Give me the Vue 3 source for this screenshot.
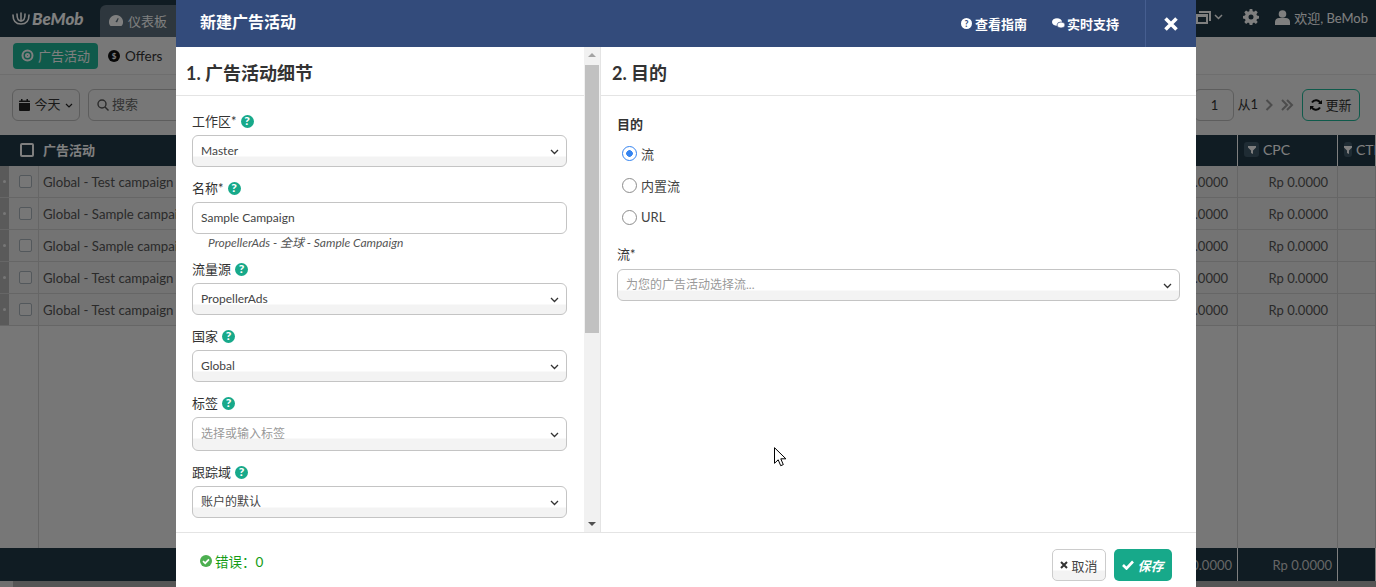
<script setup>
import { ref } from 'vue';

const rows = ref([
  'Global - Test campaign',
  'Global - Sample campaign',
  'Global - Sample campaign',
  'Global - Test campaign',
  'Global - Test campaign',
]);

const fields = [
  { label: '工作区*', value: 'Master' },
  { label: '名称*', value: 'Sample Campaign', input: true, hint: true },
  { label: '流量源', value: 'PropellerAds' },
  { label: '国家', value: 'Global' },
  { label: '标签', value: '选择或输入标签', placeholder: true, tall: true, cjk: true },
  { label: '跟踪域', value: '账户的默认', cjk: true },
];

const goals = [
  { label: '流', checked: true },
  { label: '内置流', checked: false },
  { label: 'URL', checked: false },
];
</script>

<template>
  <div class="page">
    <header class="topbar">
      <div class="logo">
        <svg width="18" height="16" viewBox="0 0 18 16" fill="none" stroke="#fff" stroke-width="1.6" stroke-linecap="round">
          <path d="M1 4c0 6 3 9 8 9s8-3 8-9" />
          <path d="M5 3c0 5 1 7 4 7s4-2 4-7" />
          <path d="M9 2v8" />
        </svg>
        <span>BeMob</span>
      </div>
      <div class="tab">
        <svg width="14" height="12" viewBox="0 0 14 12"><path fill="#fff" d="M7 0a7 7 0 0 0-6 10.6c.2.3.5.4.8.4h10.4c.3 0 .6-.1.8-.4A7 7 0 0 0 7 0zm0 7a1.3 1.3 0 0 1-.6-.1L8.800 3l.9.4-1.500 3.800A1.300 1.300 0 0 1 7 7z" /></svg>
        <span>仪表板</span>
      </div>
      <div class="topbar-right">
        <svg width="15" height="13" viewBox="0 0 15 13"><path fill="#fff" d="M3 0h12v10h-2V2H3zM0 3h12v10H0zm2 3v5h8V6z" /></svg>
        <svg class="chevron-top" width="9" height="6" viewBox="0 0 9 6" fill="none" stroke="#fff" stroke-width="1.500"><path d="M1 1l3.500 3.500L8 1" /></svg>
        <svg class="gear" width="16" height="16" viewBox="0 0 16 16"><path fill="#fff" fill-rule="evenodd" d="M6.700 0h2.600l.4 2.200 1.300.6 1.900-1.300 1.800 1.800-1.300 1.900.6 1.300 2 .4v2.600l-2 .4-.6 1.300 1.300 1.900-1.800 1.800-1.900-1.300-1.300.6-.4 2H6.700l-.4-2-1.300-.6-1.900 1.300-1.800-1.800 1.300-1.900-.6-1.300-2-.4V6.900l2-.4.6-1.300-1.300-1.900 1.800-1.800L5 2.800l1.300-.6zM8 5.500a2.500 2.500 0 1 0 0 5 2.500 2.500 0 0 0 0-5z" /></svg>
        <svg class="user" width="15" height="15" viewBox="0 0 15 15"><circle cx="7.500" cy="4" r="3.800" fill="#fff" /><path fill="#fff" d="M0 15v-3c0-2.500 2-4 4-4h7c2 0 4 1.500 4 4v3z" /></svg>
        <span class="welcome">欢迎, BeMob</span>
      </div>
    </header>

    <nav class="subnav">
      <div class="subnav-active">
        <svg width="13" height="13" viewBox="0 0 13 13" fill="none" stroke="#fff" stroke-width="2"><circle cx="6.500" cy="6.500" r="5" /><circle cx="6.500" cy="6.500" r="1.500" /></svg>
        <span>广告活动</span>
      </div>
      <div class="subnav-item">
        <svg width="12" height="12" viewBox="0 0 12 12"><circle cx="6" cy="6" r="6" fill="#111" /><text x="6" y="9" text-anchor="middle" font-size="8" font-weight="700" fill="#fff" font-family="Lato">$</text></svg>
        <span>Offers</span>
      </div>
    </nav>

    <div class="toolbar">
      <button class="tool-btn date-btn">
        <svg width="11" height="12" viewBox="0 0 11 12"><path fill="#222" d="M0 4h11v7a1 1 0 0 1-1 1H1a1 1 0 0 1-1-1zm2-4h1.500v1.500h4V0H9v1.500h1a1 1 0 0 1 1 1V3H0v-.5a1 1 0 0 1 1-1h1z" /></svg>
        <span>今天</span>
        <svg width="8" height="5" viewBox="0 0 8 5" fill="none" stroke="#222" stroke-width="1.200"><path d="M1 1l3 3 3-3" /></svg>
      </button>
      <div class="tool-btn search-box">
        <svg width="12" height="12" viewBox="0 0 12 12" fill="none" stroke="#555" stroke-width="1.400"><circle cx="5" cy="5" r="4" /><path d="M8 8l3.500 3.500" /></svg>
        <span>搜索</span>
      </div>
      <div class="toolbar-right">
        <div class="tool-btn page-input">1</div>
        <span class="page-of">从1</span>
        <svg width="9" height="12" viewBox="0 0 9 12" fill="none" stroke="#999" stroke-width="2"><path d="M1.500 1l5 5-5 5" /></svg>
        <svg class="double" width="13" height="12" viewBox="0 0 13 12" fill="none" stroke="#999" stroke-width="2"><path d="M1 1l5 5-5 5M6 1l5 5-5 5" /></svg>
        <button class="tool-btn refresh-btn">
          <svg width="12" height="12" viewBox="0 0 12 12" fill="none" stroke="#111" stroke-width="2"><path d="M10.500 4.500A4.700 4.700 0 0 0 2 3.500M1.500 7.500A4.700 4.700 0 0 0 10 8.500" /><path fill="#111" stroke="none" d="M12 1v4H8zM0 11V7h4z" /></svg>
          <span>更新</span>
        </button>
      </div>
    </div>

    <section class="table">
      <div class="table-row table-head">
        <div class="cell cell-check"><span class="check check-head"></span></div>
        <div class="cell cell-name">广告活动</div>
        <div class="cell cell-num"></div>
        <div class="cell cell-num cell-metric">
          <span class="filter"><svg width="8" height="8" viewBox="0 0 8 8"><path fill="#fff" d="M0 0h8v1.500L5 4.500V8L3 7V4.500L0 1.500z" /></svg></span>CPC
        </div>
        <div class="cell cell-metric">
          <span class="filter"><svg width="8" height="8" viewBox="0 0 8 8"><path fill="#fff" d="M0 0h8v1.500L5 4.500V8L3 7V4.500L0 1.500z" /></svg></span>CTR
        </div>
      </div>
      <div v-for="(row, index) in rows" :key="index" class="table-row table-data">
        <div class="cell cell-check">
          <span class="handle"><i></i></span>
          <span class="check"></span>
        </div>
        <div class="cell cell-name">{{ row }}</div>
        <div class="cell cell-num">Rp 0.0000</div>
        <div class="cell cell-num">Rp 0.0000</div>
        <div class="cell"></div>
      </div>
      <div class="table-row table-fill">
        <div class="cell"></div>
        <div class="cell"></div>
        <div class="cell"></div>
        <div class="cell"></div>
        <div class="cell"></div>
      </div>
      <div class="table-row table-total">
        <div class="cell"></div>
        <div class="cell"></div>
        <div class="cell cell-num">Rp 0.0000</div>
        <div class="cell cell-num">Rp 0.0000</div>
        <div class="cell"></div>
      </div>
      <div class="hscroll"><span></span></div>
    </section>

    <div class="overlay"></div>

    <div class="modal">
      <div class="modal-head">
        <h1>新建广告活动</h1>
        <a class="head-link">
          <svg width="11" height="11" viewBox="0 0 11 11"><circle cx="5.500" cy="5.500" r="5.500" fill="#fff" /><text x="5.500" y="8.600" text-anchor="middle" font-size="8.500" font-weight="900" fill="#334b7b" font-family="Lato">?</text></svg>
          查看指南
        </a>
        <a class="head-link head-link-chat">
          <svg width="13" height="11" viewBox="0 0 13 11"><ellipse cx="5" cy="4" rx="5" ry="3.800" fill="#fff" /><ellipse cx="9" cy="7" rx="4" ry="3" fill="#fff" stroke="#334b7b" stroke-width=".7" /></svg>
          实时支持
        </a>
        <button class="close-btn">
          <svg width="14" height="14" viewBox="0 0 14 14" fill="none" stroke="#fff" stroke-width="3.600"><path d="M1.500 1.500l11 11M12.500 1.500l-11 11" /></svg>
        </button>
      </div>

      <div class="modal-body">
        <div class="panel-left">
          <div class="panel-scroll">
            <h2 class="panel-title">1. 广告活动细节</h2>
            <div class="form">
              <div v-for="field in fields" :key="field.label" class="group">
                <label class="label">
                  {{ field.label }}
                  <span class="help">?</span>
                </label>
                <div v-if="field.input" class="control control-input">{{ field.value }}</div>
                <div v-else class="control control-select" :class="{ tall: field.tall, muted: field.placeholder, cjk: field.cjk }">
                  <span>{{ field.value }}</span>
                  <svg width="9" height="6" viewBox="0 0 9 6" fill="none" stroke="#333" stroke-width="1.300"><path d="M1 1l3.500 3.500L8 1" /></svg>
                </div>
                <div v-if="field.hint" class="hint">PropellerAds - 全球 - Sample Campaign</div>
              </div>
            </div>
          </div>
          <div class="scrollbar">
            <span class="arrow arrow-up"></span>
            <span class="thumb"></span>
            <span class="arrow arrow-down"></span>
          </div>
        </div>

        <div class="panel-right">
          <h2 class="panel-title">2. 目的</h2>
          <div class="form form-right">
            <div class="goal-label">目的</div>
            <div v-for="goal in goals" :key="goal.label" class="radio-row">
              <span class="radio" :class="{ on: goal.checked }"></span>
              <span>{{ goal.label }}</span>
            </div>
            <div class="flow-label">流*</div>
            <div class="control control-select muted cjk">
              <span>为您的广告活动选择流...</span>
              <svg width="9" height="6" viewBox="0 0 9 6" fill="none" stroke="#333" stroke-width="1.300"><path d="M1 1l3.500 3.500L8 1" /></svg>
            </div>
          </div>
        </div>
      </div>

      <div class="modal-foot">
        <div class="errors">
          <svg width="12" height="12" viewBox="0 0 12 12"><circle cx="6" cy="6" r="6" fill="#4caf50" /><path d="M3 6.200l2.200 2L9 4.300" fill="none" stroke="#fff" stroke-width="1.700" /></svg>
          <span>错误：0</span>
        </div>
        <button class="btn-cancel">
          <svg width="8" height="8" viewBox="0 0 8 8" fill="none" stroke="#333" stroke-width="2"><path d="M1 1l6 6M7 1L1 7" /></svg>
          取消
        </button>
        <button class="btn-save">
          <svg width="12" height="10" viewBox="0 0 12 10" fill="none" stroke="#fff" stroke-width="2.600"><path d="M1 5l3.500 3.500L11 1.500" /></svg>
          保存
        </button>
      </div>
    </div>

    <svg class="cursor" width="13" height="20" viewBox="0 0 13 20">
      <path fill="#fff" stroke="#000" stroke-width="1" d="M.5.700v15.600l3.700-3.500 2.500 5.900 2.600-1.100-2.500-5.800h5.100z" />
    </svg>
  </div>
</template>

<style scoped>
.page {
  position: relative;
  width: 1376px;
  height: 587px;
  overflow: hidden;
  background: #eeeeee;
  color: #333333;
  font-family: Lato, "Noto Sans CJK SC", sans-serif;
  font-size: 13px;
}

.topbar {
  display: flex;
  height: 37px;
  align-items: flex-end;
  padding-left: 12px;
  background: #203846;
  color: #ffffff;
}

.logo {
  display: flex;
  height: 37px;
  width: 88px;
  align-items: center;
  gap: 2px;
  font-size: 17px;
  font-weight: 900;
  font-style: italic;
}

.tab {
  display: flex;
  height: 32px;
  width: 90px;
  align-items: center;
  gap: 5px;
  padding-left: 9px;
  box-sizing: border-box;
  border-radius: 6px 6px 0 0;
  background: #5c6f7c;
  font-size: 13px;
}

.tab span {
  margin-bottom: 2px;
}

.topbar-right {
  display: flex;
  height: 37px;
  box-sizing: border-box;
  align-items: center;
  margin-left: auto;
  padding: 0 8px 3px 0;
}

.chevron-top {
  margin-left: 3px;
}

.gear {
  margin-left: 20px;
}

.user {
  margin-left: 16px;
}

.welcome {
  margin-left: 4px;
  font-size: 13px;
}

.subnav {
  display: flex;
  height: 38px;
  box-sizing: border-box;
  align-items: center;
  gap: 10px;
  padding: 0 0 0 13px;
  border-bottom: 1px solid #dddddd;
  background: #f0f0f0;
}

.subnav-active {
  display: flex;
  width: 85px;
  height: 26px;
  align-items: center;
  justify-content: center;
  gap: 4px;
  border-radius: 4px;
  background: #1fb596;
  color: #ffffff;
}

.subnav-item {
  display: flex;
  align-items: center;
  gap: 5px;
  font-size: 13.5px;
}

.toolbar {
  display: flex;
  height: 60px;
  align-items: center;
  gap: 8px;
  padding: 0 16px 0 12px;
  box-sizing: border-box;
}

.tool-btn {
  display: flex;
  height: 32px;
  box-sizing: border-box;
  align-items: center;
  border: 1px solid #bbbbbb;
  border-radius: 6px;
  background: #eeeeee;
  color: #333333;
  font: inherit;
}

.date-btn span,
.search-box span {
  margin-bottom: 3px;
}

.refresh-btn span {
  margin-bottom: 2px;
}

.date-btn {
  width: 68px;
  justify-content: center;
  gap: 4px;
  padding: 0;
}

.search-box {
  width: 200px;
  gap: 3px;
  padding-left: 8px;
  color: #666666;
}

.toolbar-right {
  display: flex;
  align-items: center;
  margin-left: auto;
}

.page-input {
  width: 40px;
  justify-content: center;
}

.page-of {
  margin: 0 7px 3px 3px;
}

.double {
  margin-left: 7px;
}

.refresh-btn {
  width: 58px;
  justify-content: center;
  gap: 3px;
  margin-left: 8px;
  padding: 0;
  border-color: #1fb596;
}

.table-row {
  display: grid;
  grid-template-columns: 39px 1099px 100px 100px 38px;
}

.cell {
  display: flex;
  box-sizing: border-box;
  align-items: center;
  min-width: 0;
  border-right: 1px solid #cccccc;
  white-space: nowrap;
}

.table-head {
  height: 31px;
  background: #203846;
  color: #ffffff;
  font-size: 13px;
  font-weight: 700;
}

.table-head .cell {
  padding-bottom: 2px;
  border-right-color: #ffffff;
}

.table-head .cell:nth-child(-n + 2),
.table-total .cell:nth-child(-n + 2) {
  border-right-color: transparent;
}

.check {
  display: block;
  width: 11px;
  height: 11px;
  border: 1px solid #a7b0b8;
  border-radius: 2px;
  background: #eeeeee;
}

.check-head {
  width: 10px;
  height: 10px;
  border: 2px solid #ffffff;
  background: transparent;
}

.cell-check {
  position: relative;
  padding-left: 19px;
}

.table-head .cell-check {
  padding-left: 20px;
}

.cell-name {
  padding-left: 4px;
}

.cell-num {
  justify-content: flex-end;
  padding-right: 9px;
  font-size: 13px;
}

.cell-metric {
  justify-content: flex-start;
  padding: 0 0 2px 6px;
  gap: 4px;
  font-size: 14px;
  font-weight: 400;
}

.filter {
  display: flex;
  width: 15px;
  height: 15px;
  align-items: center;
  justify-content: center;
  border-radius: 3px;
  background: #3f5868;
}

.table-data {
  height: 32px;
  box-sizing: border-box;
  border-bottom: 1px solid #cccccc;
  background: #e6e6e6;
  font-size: 13.2px;
  color: #555555;
}

.handle {
  position: absolute;
  top: 0;
  bottom: 0;
  left: 0;
  display: flex;
  width: 9px;
  align-items: center;
  justify-content: center;
  background: #b5b5b5;
}

.handle i {
  width: 3px;
  height: 3px;
  border-radius: 50%;
  background: #eeeeee;
}

.table-fill {
  height: 222px;
}

.table-total {
  height: 33px;
  background: #203846;
  color: #cccccc;
}

.table-total .cell {
  border-right-color: #ffffff;
}

.table-total .cell-num {
  padding-right: 5px;
}

.hscroll {
  height: 6px;
  padding-left: 13px;
  background: #dddddd;
}

.hscroll span {
  display: block;
  height: 6px;
  background: #aaaaaa;
}

.overlay {
  position: absolute;
  inset: 0;
  background: rgba(0, 0, 0, 0.5);
}

.modal {
  position: absolute;
  top: 0;
  left: 176px;
  display: flex;
  width: 1020px;
  height: 587px;
  flex-direction: column;
  background: #ffffff;
}

.modal-head {
  display: flex;
  height: 47px;
  flex: none;
  align-items: center;
  padding-left: 24px;
  background: #334b7b;
  color: #ffffff;
}

.modal-head h1 {
  margin: 0 auto 5px 0;
  font-size: 16px;
  font-weight: 700;
}

.head-link {
  display: flex;
  align-items: center;
  gap: 3px;
  font-weight: 700;
  font-size: 13px;
}

.head-link-chat {
  margin-left: 25px;
  gap: 2px;
}

.close-btn {
  display: flex;
  width: 51px;
  height: 47px;
  align-items: center;
  justify-content: center;
  margin-left: 26px;
  padding: 0;
  border: 0;
  border-left: 1px solid #465e90;
  background: transparent;
}

.modal-body {
  display: flex;
  min-height: 0;
  flex: 1;
}

.panel-left {
  display: flex;
  width: 425px;
  flex: none;
  border-right: 1px solid #e4e4e4;
  box-sizing: border-box;
}

.panel-scroll {
  min-width: 0;
  flex: 1;
  overflow: hidden;
}

.panel-title {
  height: 49px;
  box-sizing: border-box;
  margin: 0;
  padding: 0 10px;
  border-bottom: 1px solid #e4e4e4;
  color: #333333;
  font-size: 18px;
  font-weight: 700;
  line-height: 52px;
  white-space: nowrap;
}

.panel-right .panel-title {
  padding-left: 11px;
}

.form {
  display: flex;
  flex-direction: column;
  gap: 11px;
  padding: 15px 17px 0 16px;
}

.group {
  display: flex;
  flex-direction: column;
}

.label {
  display: flex;
  height: 20px;
  box-sizing: border-box;
  align-items: center;
  gap: 4px;
  margin-bottom: 4px;
  padding-bottom: 2px;
  color: #333333;
  font-size: 13px;
}

.help {
  display: flex;
  width: 13px;
  height: 13px;
  align-items: center;
  justify-content: center;
  margin-top: 2px;
  border-radius: 50%;
  background: #17a98a;
  color: #ffffff;
  font-size: 12px;
  font-weight: 900;
  line-height: 1;
}

.control {
  display: flex;
  height: 32px;
  box-sizing: border-box;
  align-items: center;
  padding: 0 8px;
  border: 1px solid #c4c4c4;
  border-radius: 6px;
  color: #444444;
  font-size: 12px;
}

.control-input {
  padding-bottom: 2px;
}

.control-select {
  justify-content: space-between;
  background: linear-gradient(#ffffff 0, #ffffff 20px, #f3f3f3 21px);
}

.control-select svg {
  flex: none;
  margin-top: 2px;
  margin-right: -1px;
}

.control-select span {
  margin-bottom: 2px;
}

.control-select.cjk span {
  margin-bottom: 4px;
}

.tall {
  height: 34px;
}

.muted {
  color: #999999;
}

.hint {
  height: 18px;
  margin-bottom: -4px;
  padding-left: 16px;
  color: #555555;
  font-size: 12px;
  font-style: italic;
  line-height: 18px;
}

.scrollbar {
  position: relative;
  display: flex;
  width: 16px;
  flex: none;
  flex-direction: column;
  margin-left: 0;
  background: #f1f1f1;
}

.thumb {
  display: block;
  height: 268px;
  margin: 18px 1px 0 1px;
  background: #c1c1c1;
}

.arrow {
  position: absolute;
  left: 4px;
  width: 0;
  height: 0;
  border-right: 4px solid transparent;
  border-left: 4px solid transparent;
}

.arrow-up {
  top: 6px;
  border-bottom: 4px solid #a3a3a3;
}

.arrow-down {
  bottom: 6px;
  border-top: 4px solid #505050;
}

.panel-right {
  min-width: 0;
  flex: 1;
}

.form-right {
  display: block;
  padding: 18px 16px 0 16px;
}

.goal-label {
  height: 20px;
  margin-bottom: 3px;
  color: #333333;
  font-size: 13px;
  font-weight: 700;
  line-height: 20px;
}

.radio-row {
  display: flex;
  height: 32px;
  align-items: center;
  gap: 4px;
  padding-left: 5px;
  color: #444444;
  font-size: 13px;
}

.radio {
  display: block;
  width: 15px;
  height: 15px;
  box-sizing: border-box;
  border: 1.5px solid #8c8c8c;
  border-radius: 50%;
}

.radio.on {
  border-color: #3584f0;
  background: radial-gradient(circle, #3584f0 0 3px, #ffffff 3.6px);
}

.flow-label {
  height: 20px;
  margin-top: 11px;
  margin-bottom: 5px;
  color: #333333;
  font-size: 13px;
  line-height: 20px;
}

.modal-foot {
  display: flex;
  height: 55px;
  flex: none;
  box-sizing: border-box;
  align-items: flex-start;
  padding: 16px 24px 0 24px;
  border-top: 1px solid #e4e4e4;
}

.errors {
  display: flex;
  align-items: center;
  gap: 3px;
  margin-top: 2px;
  margin-right: auto;
  color: #139c13;
  font-size: 13.5px;
}

.btn-cancel,
.btn-save {
  display: flex;
  height: 32px;
  box-sizing: border-box;
  align-items: center;
  justify-content: center;
  padding: 0;
  border-radius: 5px;
  font: inherit;
  font-size: 13px;
}

.btn-cancel {
  width: 54px;
  gap: 3px;
  border: 1px solid #cccccc;
  background: linear-gradient(#ffffff 0, #ffffff 20px, #f3f3f3 21px);
  color: #444444;
}

.btn-save {
  width: 58px;
  gap: 3px;
  margin-left: 8px;
  border: 0;
  background: #17a98a;
  color: #ffffff;
  font-weight: 700;
  font-style: italic;
}

.cursor {
  position: absolute;
  top: 447px;
  left: 774px;
}
</style>

<style>
html,
body {
  overflow: hidden;
}
</style>
